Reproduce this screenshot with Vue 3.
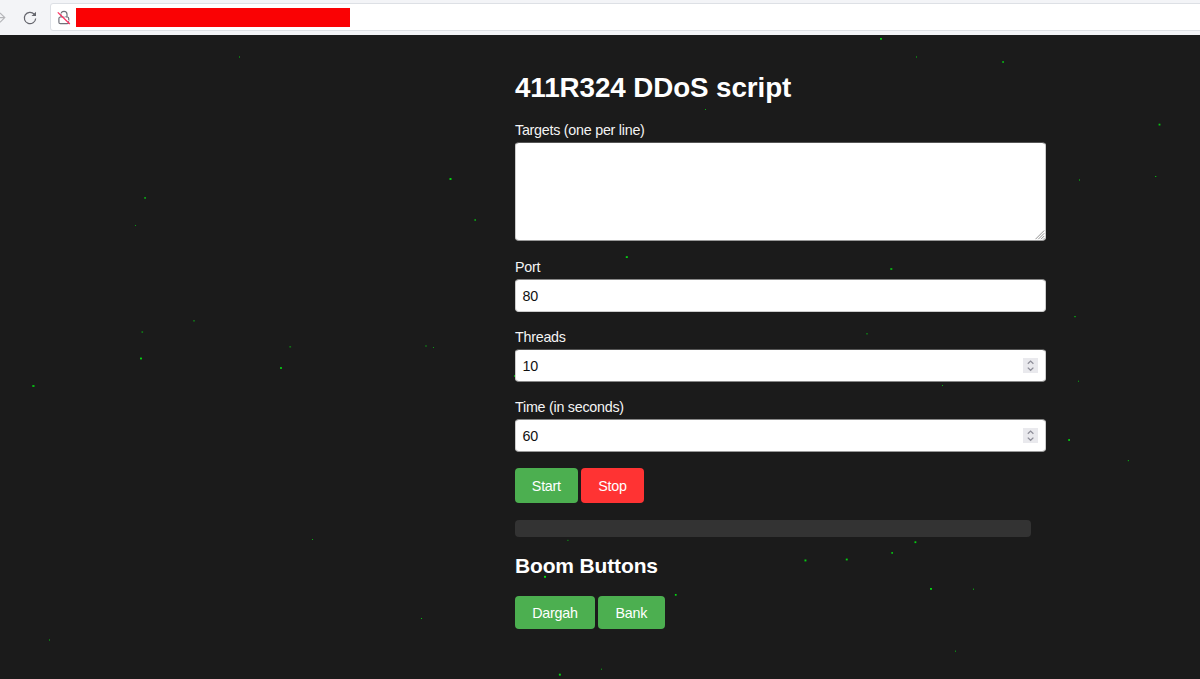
<script setup>
// x, y, width, height, opacity of each drifting speck
const specks = [
  [239, 56, 1, 2, 0.4], [449.5, 178, 2, 2, 0.85], [144.2, 197, 1.8, 1.8, 0.6],
  [135, 225, 1, 1, 0.6], [474.4, 219, 1.6, 2, 0.55], [193, 320, 2, 1.6, 0.35],
  [141.5, 331.3, 1.6, 1.5, 0.5], [140, 357.6, 2, 1.8, 0.85], [32.3, 385, 2.2, 2, 0.7],
  [289.3, 346, 1.8, 1.6, 0.4], [280, 367, 2, 2, 0.7], [425, 345, 2, 2, 0.25],
  [433, 347, 1, 1, 0.6], [312, 539, 1, 1, 0.7], [421, 618, 1, 1, 0.75],
  [49, 639, 1, 2, 0.4], [880, 38, 2, 1.7, 0.8], [916, 56, 1, 2, 0.4],
  [1002.2, 61, 1.8, 2, 0.6], [705, 109, 1, 1, 0.7], [1158.6, 123.7, 1.8, 1.8, 0.8],
  [1155, 176, 1.3, 1, 0.7], [1079, 179, 1, 2, 0.45], [890.3, 268, 2, 2, 0.65],
  [625.8, 256.2, 2, 1.8, 0.85], [1074, 316, 2, 1.2, 0.5], [866, 333, 2, 1.5, 0.35],
  [514, 375, 1, 2, 0.7], [942, 385, 1, 1, 0.7], [1078, 380.6, 1, 1.4, 0.5],
  [1068.2, 439, 1.8, 2, 0.75], [1127.8, 460, 1.2, 1.2, 0.6],
  [914.5, 541.3, 1.8, 1.8, 0.85], [891.3, 552, 1.7, 1.8, 0.75],
  [804.5, 559.5, 1.9, 1.9, 0.85], [845.8, 558.6, 1.9, 1.8, 0.85],
  [930, 588, 2, 1.8, 0.85], [973, 588.5, 1, 1.5, 0.55], [955, 650.5, 1, 1.5, 0.5],
  [567.3, 539.8, 1.2, 1.2, 0.55], [544, 575.9, 2, 1.8, 0.95],
  [674.9, 594, 1.7, 1.7, 0.9], [558.9, 673.7, 1.9, 1.9, 0.9], [601, 668.6, 1, 1.3, 0.55],
]
</script>

<template>
  <div class="window">
    <header class="toolbar">
      <svg class="forward" width="6" height="35" viewBox="0 0 6 35">
        <path d="M0 17.6H4.6M0 13L4.8 17.6L0 22.3" />
      </svg>
      <svg class="reload" width="14" height="14" viewBox="0 0 14 14">
        <path class="ring" d="M11.2 3.1A5.7 5.7 0 1 0 12.7 7.5" />
        <path class="tip" d="M13 .8V5.1H8.5Z" />
      </svg>
      <div class="address">
        <svg class="lock" width="14" height="15" viewBox="0 0 14 15">
          <path class="body" d="M4 7V4.3A3 3 0 0 1 10 4.3V7M3.6 7H10.2Q11.7 7 11.7 8.5V12.2Q11.7 13.7 10.2 13.7H3.4Q1.9 13.7 1.9 12.2V8.5Q1.9 7 3.6 7" />
          <path class="gap" d="M2.2 1.6L13.6 12.7" />
          <path class="slash" d="M.8 2.4L12.8 14" />
        </svg>
        <span class="mask"></span>
      </div>
    </header>

    <main class="content">
      <h1>411R324 DDoS script</h1>
      <div class="label">Targets (one per line)</div>
      <div class="field area">
        <svg class="grip" width="10" height="10" viewBox="0 0 10 10">
          <path d="M.5 9.2L9.2 .5M3.3 9.2L9.2 3.3M6 9.2L9.2 6M8.4 9.2L9.2 8.4" />
        </svg>
      </div>
      <div class="label">Port</div>
      <div class="field port">80</div>
      <div class="label">Threads</div>
      <div class="field threads">
        <span>10</span>
        <svg class="spinner" width="15" height="15" viewBox="0 0 15 15">
          <path d="M4.8 5.8L7.6 3.1L10.4 5.8M4.8 9.6L7.6 12.3L10.4 9.6" />
        </svg>
      </div>
      <div class="label">Time (in seconds)</div>
      <div class="field time">
        <span>60</span>
        <svg class="spinner" width="15" height="15" viewBox="0 0 15 15">
          <path d="M4.8 5.8L7.6 3.1L10.4 5.8M4.8 9.6L7.6 12.3L10.4 9.6" />
        </svg>
      </div>
      <div class="actions">
        <button class="start" type="button">Start</button>
        <button class="stop" type="button">Stop</button>
      </div>
      <div class="progress"></div>
      <h2>Boom Buttons</h2>
      <div class="actions presets">
        <button class="dargah" type="button">Dargah</button>
        <button class="bank" type="button">Bank</button>
      </div>
    </main>

    <svg class="specks" width="1200" height="679" viewBox="0 0 1200 679">
      <rect
        v-for="(s, i) in specks"
        :key="i"
        :x="s[0]"
        :y="s[1]"
        :width="s[2]"
        :height="s[3]"
        :opacity="s[4]"
      />
    </svg>
  </div>
</template>

<style>
body {
  margin: 0;
  background: #1b1b1b;
}
</style>

<style scoped>
.window {
  position: relative;
  width: 1200px;
  height: 679px;
  overflow: hidden;
  background: #1b1b1b;
  color: #f4f4f4;
  font: 14.3px/16px "Liberation Sans", Arial, sans-serif;
  letter-spacing: -0.25px;
}
.toolbar {
  display: flex;
  align-items: center;
  box-sizing: border-box;
  height: 35px;
  background: #f3f4f7;
}
.forward {
  fill: none;
  stroke: #b4b5b9;
  stroke-width: 1.1;
}
.reload {
  margin-left: 17px;
}
.ring {
  fill: none;
  stroke: #65666e;
  stroke-width: 1.2;
}
.tip {
  fill: #65666e;
}
.address {
  display: flex;
  align-items: center;
  box-sizing: border-box;
  flex: 1;
  height: 28px;
  margin: 0 -4px 1px 13px;
  padding-left: 6px;
  border: 1px solid #dde0e5;
  border-radius: 3px;
  background: #fff;
}
.lock path {
  fill: none;
}
.lock .body {
  stroke: #71727a;
  stroke-width: 1.2;
}
.lock .gap {
  stroke: #fff;
  stroke-width: 0.8;
}
.lock .slash {
  stroke: #ff3060;
  stroke-width: 1.3;
}
.mask {
  width: 273.7px;
  height: 19.5px;
  margin: 1px 0 0 5.3px;
  background: #fa0204;
}
.content {
  width: 531px;
  margin-left: 515px;
}
h1 {
  margin: 37px 0 18px;
  font-size: 27.8px;
  letter-spacing: -0.1px;
  line-height: 32px;
  color: #fff;
}
h2 {
  margin: 17px 0 18px;
  font-size: 21px;
  letter-spacing: -0.15px;
  line-height: 24px;
  color: #fff;
}
.label {
  height: 20px;
  line-height: 17px;
}
.field {
  display: flex;
  align-items: center;
  justify-content: space-between;
  box-sizing: border-box;
  height: 33px;
  margin-bottom: 17px;
  padding: 0 7px 0 6.5px;
  border: 1px solid #ccc;
  border-top-color: #888;
  border-radius: 4px;
  background: #fff;
  color: #111;
}
.area {
  height: 99px;
  margin-bottom: 18px;
  padding: 0;
  justify-content: flex-end;
  align-items: flex-end;
  border-top-color: #555;
  border-bottom-color: #999;
}
.grip {
  fill: none;
  stroke: #777;
  stroke-width: 0.8;
}
.port {
  padding-top: 1px;
}
.threads {
  border-top-color: #555;
  border-bottom-color: #888;
}
.time {
  margin-bottom: 16px;
  border-bottom-color: #999;
}
.spinner {
  background: #e9e9ed;
  fill: none;
  stroke: #8e8e99;
  stroke-width: 1.3;
}
.actions {
  display: flex;
  gap: 3.4px;
  height: 35px;
}
button {
  padding: 0;
  border: 0;
  border-radius: 4px;
  background: #4caf50;
  color: #fff;
  font: inherit;
  letter-spacing: inherit;
}
.start {
  width: 62.7px;
}
.stop {
  width: 62.7px;
  background: #ff3333;
}
.dargah {
  width: 79.8px;
}
.bank {
  width: 66.4px;
}
.progress {
  width: 516px;
  height: 17px;
  margin-top: 17px;
  border-radius: 4px;
  background: #333;
}
.presets {
  height: 33px;
}
.specks {
  position: absolute;
  inset: 0;
  fill: #00f010;
  pointer-events: none;
}
</style>
